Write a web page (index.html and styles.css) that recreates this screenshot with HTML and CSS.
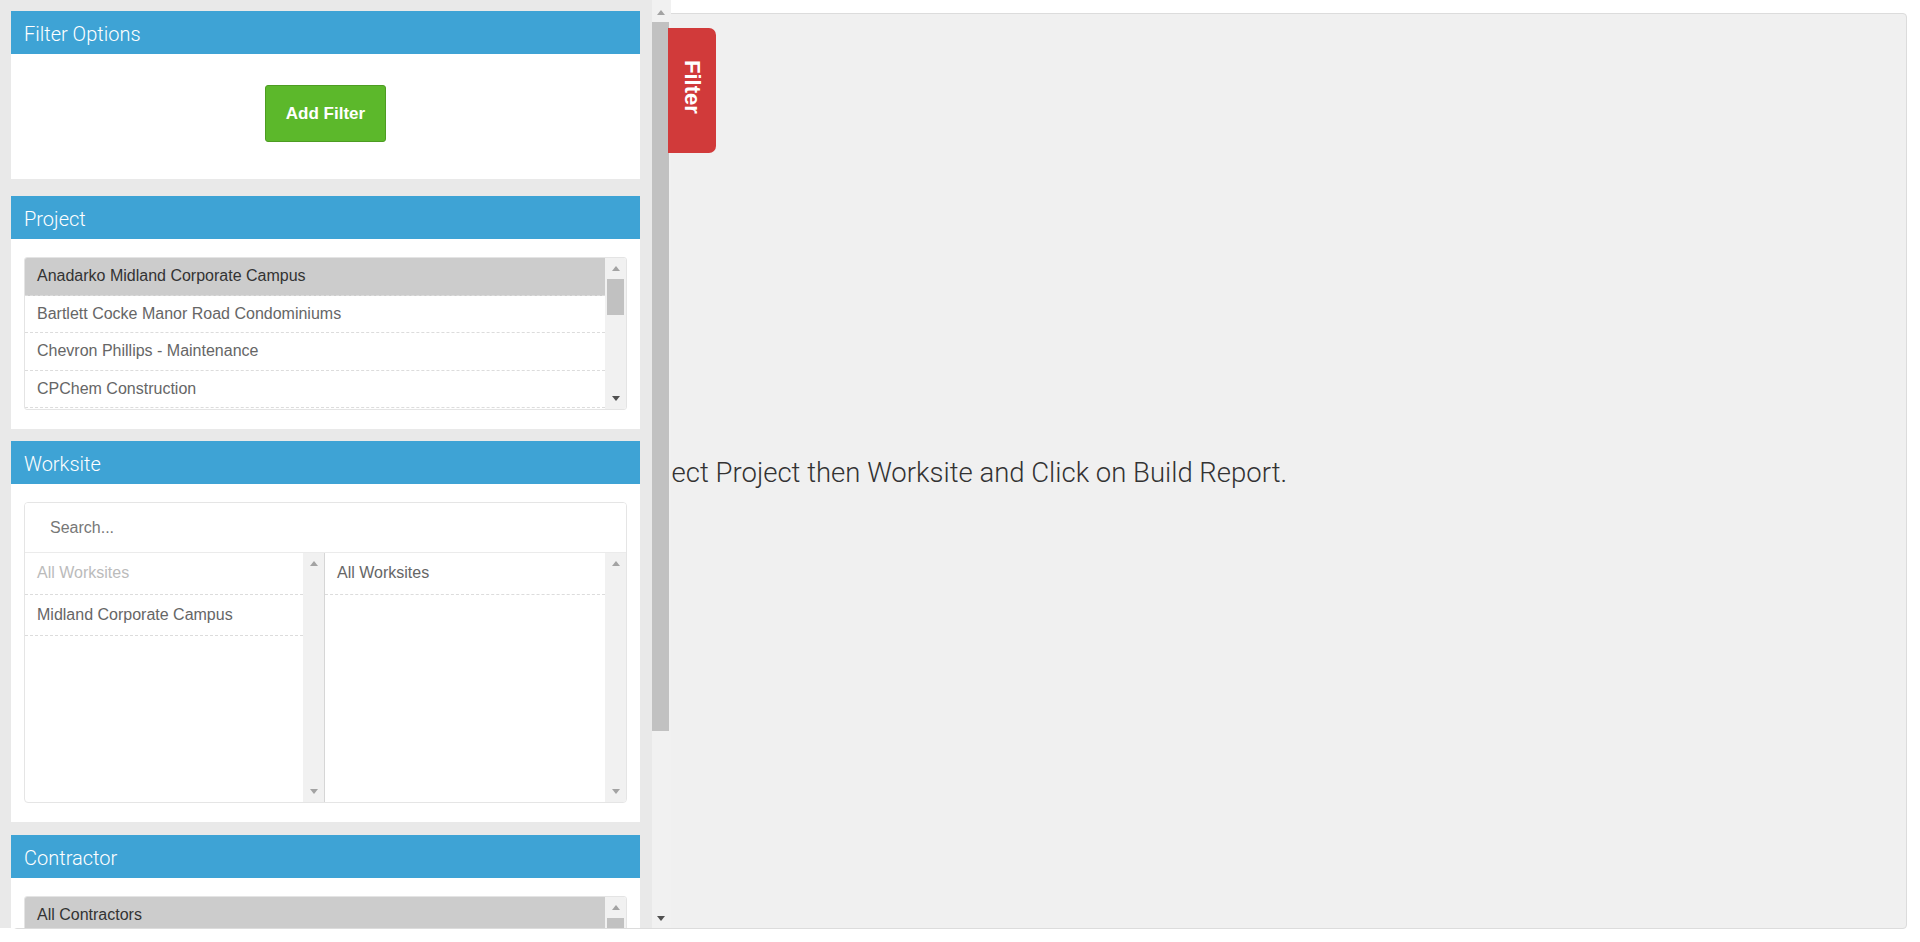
FILE: index.html
```html
<!DOCTYPE html>
<html lang="en">
<head>
<meta charset="utf-8">
<title>Report</title>
<link rel="stylesheet" href="styles.css">
</head>
<body>
<main class="report">
  <p class="report-msg">Select Project then Worksite and Click on Build Report.</p>
</main>

<aside class="sidebar">
  <div class="sidebar-inner">
    <section class="panel panel-options">
      <h2 class="panel-title">Filter Options</h2>
      <div class="options-body">
        <button class="btn-add" type="button">Add Filter</button>
      </div>
    </section>

    <section class="panel">
      <h2 class="panel-title">Project</h2>
      <div class="panel-body">
        <div class="listbox">
          <ul class="items">
            <li class="item selected">Anadarko Midland Corporate Campus</li>
            <li class="item">Bartlett Cocke Manor Road Condominiums</li>
            <li class="item">Chevron Phillips - Maintenance</li>
            <li class="item">CPChem Construction</li>
          </ul>
          <div class="sb">
            <span class="sb-btn"><span class="arrow-up"></span></span>
            <span class="sb-thumb project-thumb"></span>
            <span class="sb-fill"></span>
            <span class="sb-btn"><span class="arrow-down dark"></span></span>
          </div>
        </div>
      </div>
    </section>

    <section class="panel panel-worksite">
      <h2 class="panel-title">Worksite</h2>
      <div class="panel-body">
        <div class="picker">
          <div class="search"><input class="search-input" type="text" placeholder="Search..."></div>
          <div class="columns">
            <div class="col col-left">
              <ul class="items">
                <li class="item tall disabled">All Worksites</li>
                <li class="item tall">Midland Corporate Campus</li>
              </ul>
              <div class="sb">
                <span class="sb-btn"><span class="arrow-up"></span></span>
                <span class="sb-fill"></span>
                <span class="sb-btn"><span class="arrow-down"></span></span>
              </div>
            </div>
            <div class="col col-right">
              <ul class="items">
                <li class="item tall">All Worksites</li>
              </ul>
              <div class="sb">
                <span class="sb-btn"><span class="arrow-up"></span></span>
                <span class="sb-fill"></span>
                <span class="sb-btn"><span class="arrow-down"></span></span>
              </div>
            </div>
          </div>
        </div>
      </div>
    </section>

    <section class="panel">
      <h2 class="panel-title">Contractor</h2>
      <div class="panel-body">
        <div class="listbox">
          <ul class="items">
            <li class="item selected">All Contractors</li>
          </ul>
          <div class="sb">
            <span class="sb-btn"><span class="arrow-up"></span></span>
            <span class="sb-thumb project-thumb"></span>
            <span class="sb-fill"></span>
            <span class="sb-btn"><span class="arrow-down dark"></span></span>
          </div>
        </div>
      </div>
    </section>
  </div>

  <div class="sb sb-main">
    <span class="sb-btn main-btn"><span class="arrow-up"></span></span>
    <span class="sb-thumb main-thumb"></span>
    <span class="sb-fill"></span>
    <span class="sb-btn main-btn"><span class="arrow-down dark"></span></span>
  </div>
</aside>

<div class="filter-tab">Filter</div>
</body>
</html>
```

FILE: styles.css
```css
* { box-sizing: border-box; }

html, body {
  margin: 0;
  padding: 0;
  height: 942px;
  overflow: hidden;
  background: #ffffff;
  font-family: "Liberation Sans", Arial, sans-serif;
}

/* main report area */
.report {
  margin: 13px;
  height: 916px;
  background: #f0f0f0;
  border: 1px solid #dcdcdc;
  border-radius: 4px;
  display: flex;
  align-items: center;
  justify-content: center;
}

.report-msg {
  margin: 0 0 0 2px;
  padding-top: 3px;
  font-family: Roboto, "Liberation Sans", sans-serif;
  font-weight: 300;
  font-size: 27.5px;
  color: #333333;
}

/* sidebar overlay */
.sidebar {
  position: absolute;
  left: 0;
  top: 0;
  width: 671px;
  height: 928px;
  background: #e9e9e9;
  display: flex;
  overflow: hidden;
}

.sidebar-inner {
  width: 652px;
  flex: none;
  padding: 11px 12px 0 11px;
  overflow: hidden;
}

.panel {
  background: #ffffff;
  margin-bottom: 12px;
}

.panel-options { margin-bottom: 17px; }
.panel-worksite { margin-bottom: 13px; }

.panel-title {
  margin: 0;
  height: 43px;
  padding: 4px 0 0 13px;
  line-height: 39px;
  background: #3ea3d5;
  color: #ffffff;
  font-family: Roboto, "Liberation Sans", sans-serif;
  font-weight: 300;
  font-size: 20px;
}

.options-body {
  padding: 31px 0 37px;
}

.btn-add {
  display: block;
  margin: 0 auto;
  width: 121px;
  height: 57px;
  background: #5cb82b;
  border: 1px solid #4d9c22;
  border-radius: 3px;
  color: #ffffff;
  font-family: "Liberation Sans", Arial, sans-serif;
  font-weight: bold;
  font-size: 17px;
  padding: 0;
}

.panel-body {
  padding: 18px 13px 19px;
}

/* list boxes */
.listbox {
  display: flex;
  height: 153px;
  border: 1px solid #e4e4e4;
  border-radius: 3px;
  overflow: hidden;
}

.items {
  flex: 1;
  min-width: 0;
  list-style: none;
  margin: 0;
  padding: 0;
  overflow: hidden;
}

.item {
  height: 37.5px;
  line-height: 36.5px;
  padding: 0 12px;
  border-bottom: 1px dashed #dcdcdc;
  font-size: 16px;
  color: #666666;
  white-space: nowrap;
}

.item.selected {
  background: #cccccc;
  color: #333333;
}

.item.tall {
  height: 41.5px;
  line-height: 40.5px;
}

.item.disabled { color: #bbbbbb; }

/* fake scrollbars */
.sb {
  width: 21px;
  flex: none;
  background: #f1f1f1;
  display: flex;
  flex-direction: column;
  align-items: center;
}

.sb-btn {
  height: 21px;
  width: 100%;
  flex: none;
  display: flex;
  align-items: center;
  justify-content: center;
}

.sb-thumb {
  flex: none;
  width: 17px;
  background: #c1c1c1;
}

.project-thumb { height: 36px; }

.sb-fill { flex: 1; }

.arrow-up {
  width: 0;
  height: 0;
  border-left: 4.5px solid transparent;
  border-right: 4.5px solid transparent;
  border-bottom: 5px solid #a3a3a3;
}

.arrow-down {
  width: 0;
  height: 0;
  border-left: 4.5px solid transparent;
  border-right: 4.5px solid transparent;
  border-top: 5px solid #a3a3a3;
}

.arrow-down.dark { border-top-color: #505050; }

.sb-main {
  width: 19px;
  align-items: flex-start;
}

.main-btn {
  height: 22px;
  width: 17px;
  padding-top: 2px;
}

.main-thumb { height: 709px; }

/* worksite picker */
.picker {
  height: 301px;
  border: 1px solid #e5e5e5;
  border-radius: 4px;
  overflow: hidden;
  display: flex;
  flex-direction: column;
}

.search {
  height: 50px;
  flex: none;
  border-bottom: 1px solid #ebebeb;
}

.search-input {
  display: block;
  width: 100%;
  height: 49px;
  border: none;
  outline: none;
  padding: 0 25px;
  font-family: "Liberation Sans", Arial, sans-serif;
  font-size: 16px;
  color: #555555;
  background: #ffffff;
}

.search-input::placeholder { color: #777777; }

.columns {
  flex: 1;
  display: flex;
}

.col {
  display: flex;
}

.col-left {
  width: 300px;
  border-right: 1px solid #d6d6d6;
}

.col-right {
  flex: 1;
}

/* filter tab */
.filter-tab {
  position: absolute;
  left: 668px;
  top: 28px;
  width: 48px;
  height: 125px;
  padding-bottom: 8px;
  background: #d13a3a;
  border-radius: 0 7px 7px 0;
  color: #ffffff;
  font-family: "Liberation Sans", Arial, sans-serif;
  font-weight: bold;
  font-size: 22px;
  writing-mode: vertical-rl;
  display: flex;
  align-items: center;
  justify-content: center;
}
```
